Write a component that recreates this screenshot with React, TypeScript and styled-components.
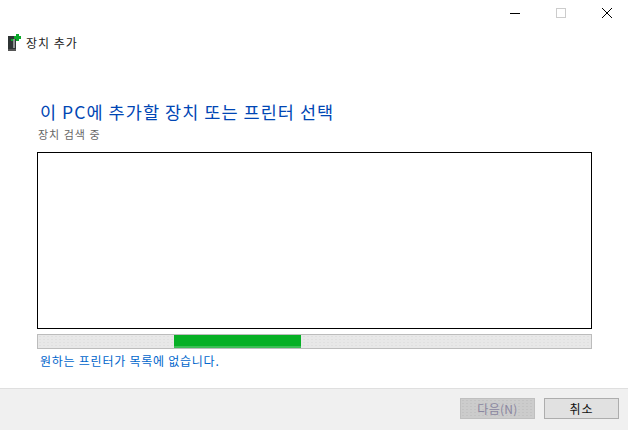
import React from "react";
import styled, { createGlobalStyle } from "styled-components";

const Global = createGlobalStyle`
  html, body { margin: 0; padding: 0; background: #fff; }
  #root { width: 628px; height: 430px; }
`;
const Win = styled.div`
  width: 628px; height: 430px; display: flex; flex-direction: column; overflow: hidden;
  background: #fff;
  font-family: "Noto Sans CJK KR", "Noto Sans", sans-serif;
`;
const TitleBar = styled.div`
  height: 26px; display: flex; justify-content: flex-end; align-items: flex-start;
`;
const WinBtn = styled.div`
  width: 46px; height: 26px; box-sizing: border-box; padding-left: 4px;
  display: flex; align-items: center; justify-content: center;
  svg { display: block; }
`;
const Header = styled.div`
  height: 33px; display: flex; align-items: center; padding-left: 8px; gap: 5px;
  font-size: 12px; letter-spacing: 1px; color: #222;
`;
const Body = styled.div`
  flex: 1; display: flex; flex-direction: column; padding: 0 36px 0 37px;
`;
const Heading = styled.h1`
  margin: 41px 0 0 3px; font-size: 17.5px; font-weight: 400; line-height: 24px;
  letter-spacing: 1.05px; color: #0046b4;
`;
const Sub = styled.div`
  margin: 2px 0 0 1px; font-size: 11px; line-height: 16px; letter-spacing: 1px; color: #666;
`;
const ListBox = styled.div`
  margin-top: 10px; height: 177px; box-sizing: border-box; border: 1px solid #000; background: #fff;
`;
const Track = styled.div`
  margin-top: 5px; height: 15px; box-sizing: border-box; border: 1px solid #bcbcbc;
  background-color: #e8e8e8;
  background-image: radial-gradient(#e0e0e0 0.6px, transparent 0.7px);
  background-size: 4px 3px;
  display: flex;
`;
const Fill = styled.div<{ $left: number; $width: number }>`
  margin-left: ${p => p.$left}px; width: ${p => p.$width}px; height: 100%;
  background: linear-gradient(#06b025 0 11px, #3cbf55 11px);
`;
const LinkText = styled.a`
  margin: 3px 0 0 3px; font-size: 12px; line-height: 17px; letter-spacing: 0.75px; color: #0066cc; text-decoration: none;
`;
const Footer = styled.div`
  height: 42px; box-sizing: border-box; border-top: 1px solid #dfdfdf; background: #f0f0f0;
  display: flex; justify-content: flex-end; align-items: flex-start; gap: 9px;
  padding: 9px 9px 0 0;
`;
const Btn = styled.button<{ $disabled?: boolean }>`
  width: 75px; height: 21px; box-sizing: border-box; padding: 0; margin: 0;
  font-family: inherit; font-size: 12px; line-height: 19px;
  letter-spacing: ${p => (p.$disabled ? "0.3px" : "1px")};
  border: 1px solid ${p => (p.$disabled ? "#bfbfbf" : "#adadad")};
  background-color: ${p => (p.$disabled ? "#cccccc" : "#e1e1e1")};
  background-image: ${p => (p.$disabled ? "radial-gradient(#c3c3c3 0.6px, transparent 0.7px)" : "none")};
  background-size: 4px 3px;
  color: ${p => (p.$disabled ? "#8a86a0" : "#111")};
`;

export default function App() {
  return (
    <Win>
      <Global />
      <TitleBar>
        <WinBtn>
          <svg width="10" height="10"><path d="M0 5.5H10" stroke="#000" /></svg>
        </WinBtn>
        <WinBtn>
          <svg width="10" height="10"><rect x=".5" y=".5" width="9" height="9" fill="none" stroke="#ccc" /></svg>
        </WinBtn>
        <WinBtn>
          <svg width="10" height="10"><path d="M0 0L10 10M10 0L0 10" stroke="#000" /></svg>
        </WinBtn>
      </TitleBar>
      <Header>
        <svg width="13" height="17" viewBox="0 0 13 17">
          <rect x="0" y="2" width="8" height="13" fill="#2e3434" />
          <rect x="5" y="5" width="2" height="9" fill="#8c9090" />
          <rect x="3" y="5" width="2" height="2" fill="#0aa82a" />
          <rect x="0" y="15" width="8" height="2" fill="#555" />
          <path d="M6 2H8V0H11V2H13V5H11V7H8V5H6Z" fill="#0aa82a" />
        </svg>
        <span>장치 추가</span>
      </Header>
      <Body>
        <Heading>이 PC에 추가할 장치 또는 프린터 선택</Heading>
        <Sub>장치 검색 중</Sub>
        <ListBox />
        <Track><Fill $left={136} $width={127} /></Track>
        <LinkText>원하는 프린터가 목록에 없습니다.</LinkText>
      </Body>
      <Footer>
        <Btn $disabled>다음(N)</Btn>
        <Btn>취소</Btn>
      </Footer>
    </Win>
  );
}
